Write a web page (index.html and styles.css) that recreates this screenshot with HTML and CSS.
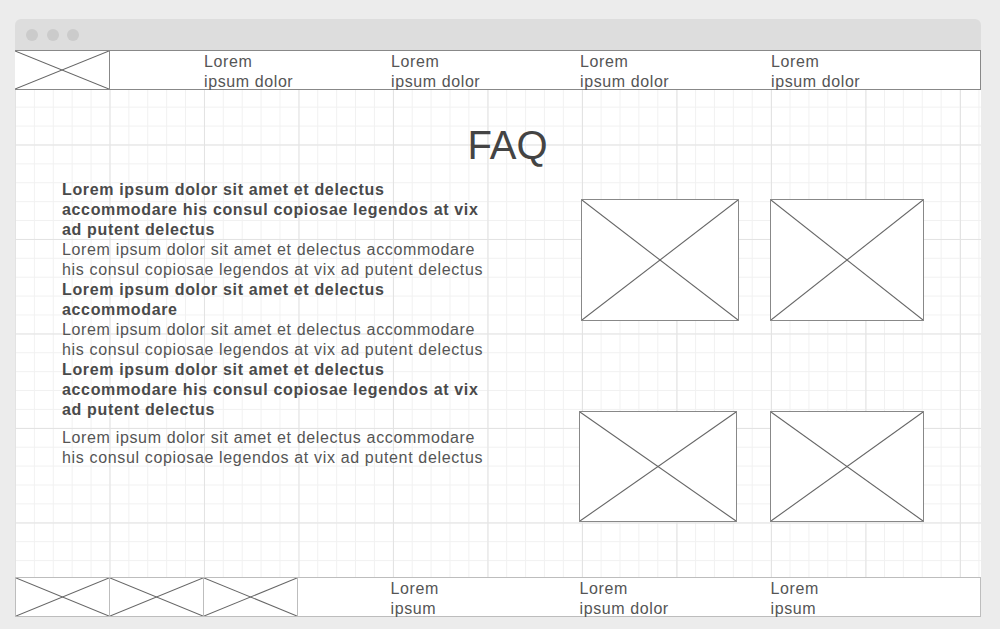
FILE: index.html
```html
<!DOCTYPE html>
<html lang="en">
<head>
<meta charset="utf-8">
<title>FAQ</title>
<link rel="stylesheet" href="styles.css">
</head>
<body>
<div class="window">
  <div class="titlebar">
    <span class="dot"></span><span class="dot"></span><span class="dot"></span>
  </div>
  <div class="canvas">
    <header class="topbar">
      <div class="ph ph-logo">
        <svg viewBox="0 0 100 100" preserveAspectRatio="none"><line x1="0" y1="0" x2="100" y2="100"/><line x1="100" y1="0" x2="0" y2="100"/></svg>
      </div>
      <a class="nav nav-1">Lorem<br>ipsum dolor</a>
      <a class="nav nav-2">Lorem<br>ipsum dolor</a>
      <a class="nav nav-3">Lorem<br>ipsum dolor</a>
      <a class="nav nav-4">Lorem<br>ipsum dolor</a>
    </header>
    <main class="main">
      <h1 class="title">FAQ</h1>
      <div class="faq-body">
        <div class="qa">
          <p class="q">Lorem ipsum dolor sit amet et delectus accommodare his consul copiosae legendos at vix ad putent delectus</p>
          <p class="a">Lorem ipsum dolor sit amet et delectus accommodare his consul copiosae legendos at vix ad putent delectus</p>
          <p class="q">Lorem ipsum dolor sit amet et delectus accommodare</p>
          <p class="a">Lorem ipsum dolor sit amet et delectus accommodare his consul copiosae legendos at vix ad putent delectus</p>
          <p class="q">Lorem ipsum dolor sit amet et delectus accommodare his consul copiosae legendos at vix ad putent delectus</p>
          <p class="a a-last">Lorem ipsum dolor sit amet et delectus accommodare his consul copiosae legendos at vix ad putent delectus</p>
        </div>
        <div class="gallery">
          <div class="row row-1">
            <div class="ph img img-a"><svg viewBox="0 0 100 100" preserveAspectRatio="none"><line x1="0" y1="0" x2="100" y2="100"/><line x1="100" y1="0" x2="0" y2="100"/></svg></div>
            <div class="ph img img-b"><svg viewBox="0 0 100 100" preserveAspectRatio="none"><line x1="0" y1="0" x2="100" y2="100"/><line x1="100" y1="0" x2="0" y2="100"/></svg></div>
          </div>
          <div class="row row-2">
            <div class="ph img img-c"><svg viewBox="0 0 100 100" preserveAspectRatio="none"><line x1="0" y1="0" x2="100" y2="100"/><line x1="100" y1="0" x2="0" y2="100"/></svg></div>
            <div class="ph img img-d"><svg viewBox="0 0 100 100" preserveAspectRatio="none"><line x1="0" y1="0" x2="100" y2="100"/><line x1="100" y1="0" x2="0" y2="100"/></svg></div>
          </div>
        </div>
      </div>
    </main>
    <footer class="bottombar">
      <div class="ph ph-foot"><svg viewBox="0 0 100 100" preserveAspectRatio="none"><line x1="0" y1="0" x2="100" y2="100"/><line x1="100" y1="0" x2="0" y2="100"/></svg></div>
      <div class="ph ph-foot"><svg viewBox="0 0 100 100" preserveAspectRatio="none"><line x1="0" y1="0" x2="100" y2="100"/><line x1="100" y1="0" x2="0" y2="100"/></svg></div>
      <div class="ph ph-foot"><svg viewBox="0 0 100 100" preserveAspectRatio="none"><line x1="0" y1="0" x2="100" y2="100"/><line x1="100" y1="0" x2="0" y2="100"/></svg></div>
      <a class="nav fnav-1">Lorem<br>ipsum</a>
      <a class="nav fnav-2">Lorem<br>ipsum dolor</a>
      <a class="nav fnav-3">Lorem<br>ipsum</a>
    </footer>
  </div>
</div>
</body>
</html>
```

FILE: styles.css
```css
* { box-sizing: border-box; }

html, body {
  margin: 0;
  padding: 0;
}

body {
  background: #ececec;
  font-family: "Liberation Sans", Arial, sans-serif;
  color: #555;
  padding: 19px 0 0 15px;
}

.window {
  width: 966px;
  height: 598px;
  display: flex;
  flex-direction: column;
}

.titlebar {
  height: 31px;
  background: #dddddd;
  border-radius: 6px 6px 0 0;
  display: flex;
  align-items: center;
  gap: 8.5px;
  padding: 0 0 0 11px;
}

.dot {
  width: 12px;
  height: 12px;
  border-radius: 50%;
  background: #cbcbcb;
}

.canvas {
  flex: 1;
  display: flex;
  flex-direction: column;
  background-color: #fff;
  background-image:
    linear-gradient(to right, #e3e3e3 1px, transparent 1px),
    linear-gradient(to bottom, #e3e3e3 1px, transparent 1px),
    linear-gradient(to right, #f1f1f1 1px, transparent 1px),
    linear-gradient(to bottom, #f1f1f1 1px, transparent 1px);
  background-size: 94.5px 94.5px, 94.5px 94.5px, 18.9px 18.9px, 18.9px 18.9px;
}

/* placeholder boxes */
.ph {
  background: #fff;
}
.ph svg {
  display: block;
  width: 100%;
  height: 100%;
}
.ph line {
  stroke: #666;
  stroke-width: 1.1;
  vector-effect: non-scaling-stroke;
}

.nav {
  font-size: 16px;
  line-height: 20px;
  letter-spacing: 0.6px;
  color: #555;
  white-space: nowrap;
  padding-top: 1px;
}

/* header */
.topbar {
  height: 40px;
  border: 1px solid #888;
  background: #fff;
  display: grid;
  grid-template-columns: repeat(10, 94.5px) 1fr;
  grid-template-rows: 38px;
}
.ph-logo {
  grid-column: 1;
  border-right: 1px solid #888;
  margin-left: -1px;
  width: 95px;
}
.nav-1 { grid-column: 3; margin-left: -1px; }
.nav-2 { grid-column: 5; margin-left: -3px; }
.nav-3 { grid-column: 7; margin-left: -3px; }
.nav-4 { grid-column: 9; margin-left: -1px; }

/* main */
.main {
  flex: 1;
  padding: 32px 28px 0 47px;
}

.title {
  margin: 0;
  text-align: center;
  font-weight: normal;
  font-size: 40px;
  line-height: 46px;
  color: #444;
}

.faq-body {
  display: flex;
  align-items: flex-start;
  margin-top: 11.5px;
}

.qa {
  width: 426px;
  flex: none;
  font-size: 16px;
  line-height: 20px;
  letter-spacing: 0.65px;
  color: #555;
}
.qa p { margin: 0; }
.q { font-weight: bold; color: #4a4a4a; }
.a-last { margin-top: 8px !important; }

.gallery {
  margin-left: 93px;
  margin-top: 19.5px;
  display: flex;
  flex-direction: column;
  gap: 90px;
}
.row {
  display: flex;
}
.row-1 { gap: 31px; }
.row-2 { gap: 33px; margin-left: -2px; }

.img { border: 1px solid #888; }
.img-a { width: 158px; height: 122px; }
.img-b { width: 154px; height: 122px; }
.img-c { width: 158px; height: 111px; }
.img-d { width: 154px; height: 111px; }

/* footer */
.bottombar {
  height: 40px;
  border: 1px solid #bdbdbd;
  background: #fff;
  display: grid;
  grid-template-columns: 94px 94px 94px repeat(7, 94.5px) 1fr;
  grid-template-rows: 38px;
}
.ph-foot {
  border-right: 1px solid #bdbdbd;
}
.fnav-1 { grid-column: 5; margin-left: -2px; }
.fnav-2 { grid-column: 7; margin-left: -2px; }
.fnav-3 { grid-column: 9; margin-left: 0; }
```
